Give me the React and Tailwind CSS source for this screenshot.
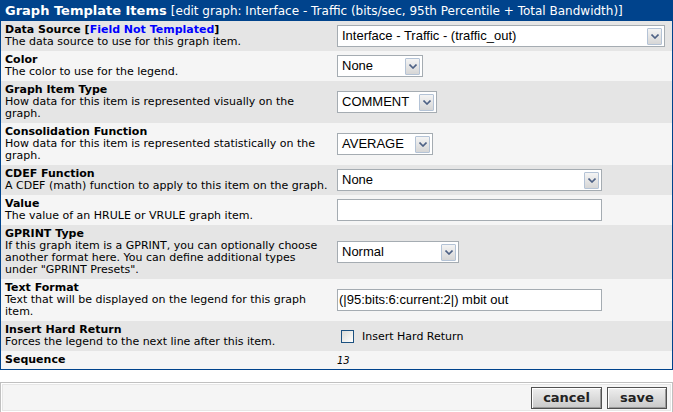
import { useState } from 'react';

const Chevron = () => (
  <span className="flex items-center justify-center w-[15px] h-[17px] border border-[#b4c3d6] bg-gradient-to-b from-[#f4f4f4] to-[#d6d6d6] rounded-[1px]">
    <svg width="8" height="5" viewBox="0 0 8 5">
      <path d="M0.5 0.5 L4 4 L7.5 0.5" fill="none" stroke="#4d6185" strokeWidth="1.6" />
    </svg>
  </span>
);

const FakeSelect = ({ value, width }) => (
  <div
    className={`flex items-center justify-between h-[22px] border border-[#a5acb2] bg-white pl-[4px] pr-[2px] text-[13px] text-black font-['Liberation_Sans',Arial,sans-serif] ${width}`}
  >
    <span className="whitespace-nowrap">{value}</span>
    <Chevron />
  </div>
);

const TextBox = ({ value }) => (
  <div className="flex items-center h-[22px] w-[265px] border border-[#a5acb2] bg-white pl-[1px] text-[13px] text-black font-['Liberation_Sans',Arial,sans-serif] whitespace-nowrap">
    {value}
  </div>
);

const rows = [
  {
    label: (
      <>
        Data Source [<span className="text-[#0000ff]">Field Not Templated</span>]
      </>
    ),
    desc: 'The data source to use for this graph item.',
    field: <FakeSelect value="Interface - Traffic - (traffic_out)" width="w-[328px]" />,
  },
  {
    label: 'Color',
    desc: 'The color to use for the legend.',
    field: <FakeSelect value="None" width="w-[86px]" />,
  },
  {
    label: 'Graph Item Type',
    desc: 'How data for this item is represented visually on the graph.',
    field: <FakeSelect value="COMMENT" width="w-[100px]" />,
  },
  {
    label: 'Consolidation Function',
    desc: 'How data for this item is represented statistically on the graph.',
    field: <FakeSelect value="AVERAGE" width="w-[96px]" />,
  },
  {
    label: 'CDEF Function',
    desc: 'A CDEF (math) function to apply to this item on the graph.',
    field: <FakeSelect value="None" width="w-[265px]" />,
  },
  {
    label: 'Value',
    desc: 'The value of an HRULE or VRULE graph item.',
    field: <TextBox value="" />,
  },
  {
    label: 'GPRINT Type',
    desc: 'If this graph item is a GPRINT, you can optionally choose another format here. You can define additional types under "GPRINT Presets".',
    field: <FakeSelect value="Normal" width="w-[122px]" />,
  },
  {
    label: 'Text Format',
    desc: 'Text that will be displayed on the legend for this graph item.',
    field: <TextBox value="(|95:bits:6:current:2|) mbit out" />,
  },
  {
    label: 'Insert Hard Return',
    desc: 'Forces the legend to the next line after this item.',
    field: 'checkbox',
  },
  {
    label: 'Sequence',
    desc: null,
    field: <span className="italic text-[10px]">13</span>,
  },
];

const App = () => {
  const [hardReturn, setHardReturn] = useState(false);

  return (
    <div className="w-[673px] h-[412px] bg-white font-['DejaVu_Sans',Verdana,sans-serif] text-black">
      <div className="border border-[#00438c]">
        <div className="h-[20px] bg-[#00438c] text-white text-[13px] leading-[20px] pl-[4px] whitespace-nowrap">
          <span className="font-bold">Graph Template Items</span>{' '}
          <span className="text-[12px]">[edit graph: Interface - Traffic (bits/sec, 95th Percentile + Total Bandwidth)]</span>
        </div>
        {rows.map((row, i) => (
          <div
            key={i}
            className={[
              i % 2 === 0 ? 'bg-[#e5e5e5]' : 'bg-[#f5f5f5]',
              'grid grid-cols-[335px_1fr]',
            ].join(' ')}
          >
            <div className="pl-[4px] pr-[6px] py-[3px] text-[11px] leading-[12px]">
              <div className="font-bold">{row.label}</div>
              {row.desc && <div>{row.desc}</div>}
            </div>
            <div className="flex items-center pl-[1px]">
              {row.field === 'checkbox' ? (
                <label className="flex items-center gap-[8px] text-[11px] pl-[4px] cursor-pointer">
                  <span
                    onClick={() => setHardReturn(!hardReturn)}
                    className="w-[13px] h-[13px] border border-[#1c5180] bg-gradient-to-br from-[#dcdcd7] to-white"
                  />
                  <span className="pt-[2px]">Insert Hard Return</span>
                </label>
              ) : (
                row.field
              )}
            </div>
          </div>
        ))}
      </div>

      <div className="mt-[12px] border border-[#c0c0c0] p-[1px]">
        <div className="flex justify-end items-center gap-[5px] h-[27px] bg-[#f5f5f5] border border-[#e6e6e6] pr-[3px]">
          <button className="h-[22px] w-[71px] border border-[#505050] bg-gradient-to-b from-[#eeeeee] to-[#c9c9c9] shadow-[inset_1px_1px_0_#ffffff,inset_-1px_-1px_0_#9a9a9a] text-[13px] font-bold text-[#222]">
            cancel
          </button>
          <button className="h-[22px] w-[60px] border border-[#505050] bg-gradient-to-b from-[#eeeeee] to-[#c9c9c9] shadow-[inset_1px_1px_0_#ffffff,inset_-1px_-1px_0_#9a9a9a] text-[13px] font-bold text-[#222]">
            save
          </button>
        </div>
      </div>
    </div>
  );
};

export default App;
